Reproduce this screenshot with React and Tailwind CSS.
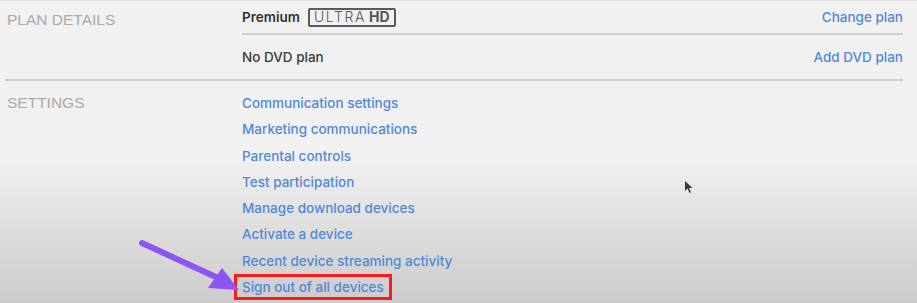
import React from "react";

const links = [
  "Communication settings",
  "Marketing communications",
  "Parental controls",
  "Test participation",
  "Manage download devices",
  "Activate a device",
  "Recent device streaming activity",
];

export default function App() {
  return (
    <div
      className="relative w-[917px] h-[303px] overflow-hidden border-t border-[#e2e2e2] bg-[linear-gradient(to_bottom,#f1f1f1_0%,#f1f1f1_52%,#e2e2e2_70%,#cbcbcb_100%)]"
      style={{ fontFamily: 'Inter, "Liberation Sans", Arial, sans-serif' }}
    >
      {/* Plan details */}
      <div className="flex ml-[5px] mr-[14px] border-b-2 border-[#cdcdcd] h-[80px]">
        <div
          className="w-[237px] pl-[2px] pt-[10px] text-[15.5px] leading-[18px] text-[#aaaaaa]"
          style={{ fontFamily: '"Liberation Sans", Arial, sans-serif' }}
        >
          PLAN DETAILS
        </div>
        <div className="flex-1 flex flex-col">
          <div className="h-[34px] flex items-center justify-between border-b-2 border-[#cfcfcf]">
            <div className="flex items-center">
              <span className="text-[13.5px] font-semibold text-[#333]">Premium</span>
              <span className="ml-[8px] flex items-center h-[19px] pl-[4px] pr-[4px] border-2 border-[#5a5a5a] rounded-[2px] text-[14px] leading-none text-[#555]">
                <span className="font-light tracking-[1.6px]">ULTRA</span>
                <span className="font-bold ml-[3px]">HD</span>
              </span>
            </div>
            <span className="text-[13.5px] font-medium text-[#5189d9]">Change plan</span>
          </div>
          <div className="flex-1 flex items-center justify-between pt-[1px]">
            <span className="text-[13.5px] font-medium text-[#3a3a3a]">No DVD plan</span>
            <span className="text-[13.5px] font-medium text-[#5189d9]">Add DVD plan</span>
          </div>
        </div>
      </div>

      {/* Settings */}
      <div className="flex ml-[5px] mr-[14px] pt-[13px]">
        <div
          className="w-[237px] pl-[2px] text-[15.5px] leading-[18px] text-[#aaaaaa]"
          style={{ fontFamily: '"Liberation Sans", Arial, sans-serif' }}
        >
          SETTINGS
        </div>
        <div className="flex flex-col gap-[8.3px]">
          {links.map((l) => (
            <span key={l} className="text-[13.5px] font-medium leading-[18px] text-[#5189d9]">
              {l}
            </span>
          ))}
          <span className="self-start -ml-[8px] -mt-[4px] px-[5px] py-[1px] border-[3px] border-[#ff1a1a] text-[13.5px] font-medium leading-[18px] text-[#5189d9]">
            Sign out of all devices
          </span>
        </div>
      </div>

      {/* Purple arrow */}
      <svg
        className="absolute left-0 top-0 pointer-events-none"
        width="917"
        height="303"
        viewBox="0 0 917 303"
      >
        <line
          x1="142"
          y1="242"
          x2="218"
          y2="277"
          stroke="#8c55f4"
          strokeWidth="6"
          strokeLinecap="round"
        />
        <polygon points="239,289 208,287 222,267" fill="#8c55f4" />
      </svg>

      {/* Mouse cursor */}
      <svg
        className="absolute left-[684px] top-[179px]"
        width="9"
        height="14"
        viewBox="0 0 9 14"
      >
        <path d="M1 1 L1 11 L3.5 8.5 L5.5 13 L7 12.3 L5 8 L8.5 8 Z" fill="#3a3a3a" />
      </svg>
    </div>
  );
}
